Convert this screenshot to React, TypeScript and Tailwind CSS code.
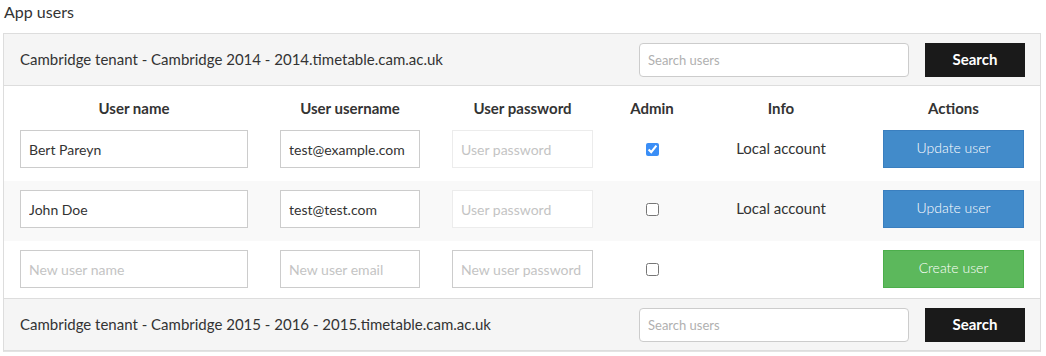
import React from "react";

type User = { name: string; email: string; admin: boolean; info: string };

const tenants: { title: string; users: User[] }[] = [
    {
        title: "Cambridge tenant - Cambridge 2014 - 2014.timetable.cam.ac.uk",
        users: [
            { name: "Bert Pareyn", email: "test@example.com", admin: true, info: "Local account" },
            { name: "John Doe", email: "test@test.com", admin: false, info: "Local account" },
        ],
    },
    { title: "Cambridge tenant - Cambridge 2015 - 2016 - 2015.timetable.cam.ac.uk", users: [] },
];

const font = { fontFamily: "Lato, 'Open Sans', sans-serif" };
const gridCls = "grid grid-cols-[260px_172px_173px_86px_172px_1fr]";
const inputCls = "w-full h-[38px] px-[8px] bg-white border border-[#cccccc] text-[14px] text-[#333] placeholder:text-[#c4c4c4] outline-none";

function TenantHeader({ title }: { title: string }) {
    return (
        <div className="flex items-center justify-between h-[52px] bg-[#f5f5f5] border-b border-[#dddddd] pl-4 pr-[15px]">
            <span className="text-[15px] text-[#333]">{title}</span>
            <div className="flex items-center gap-4">
                <input className="w-[270px] h-[34px] px-[8px] rounded border border-[#cccccc] bg-white text-[13px] placeholder:text-[#b0b0b0] outline-none" placeholder="Search users" />
                <button className="w-[100px] h-[34px] bg-[#1a1a1a] text-white text-[15px] font-bold">Search</button>
            </div>
        </div>
    );
}

function UserRow({ user, striped }: { user: User; striped: boolean }) {
    return (
        <div className={`${gridCls} h-[60px] pt-[9px] ${striped ? "bg-[#f9f9f9]" : "bg-white"}`}>
            <div className="px-4"><input className={inputCls} defaultValue={user.name} /></div>
            <div className="px-4"><input className={inputCls} defaultValue={user.email} /></div>
            <div className="px-4"><input className={`${inputCls} border-[#ececec]`} placeholder="User password" /></div>
            <div className="flex justify-center pt-[13px]">
                <input type="checkbox" defaultChecked={user.admin} className="w-[13px] h-[13px] accent-[#3a8ef6]" />
            </div>
            <div className="text-center text-[15px] text-[#333] pt-[7px]">{user.info}</div>
            <div className="px-4">
                <button className="w-full h-[38px] pb-[3px] bg-[#428bca] border border-[#3a7fbf] text-white text-[14px] font-light">Update user</button>
            </div>
        </div>
    );
}

export default function App() {
    return (
        <div className="pl-[3px] pr-[5px] bg-white text-[#333]" style={font}>
            <h1 className="h-[33px] text-[16px] leading-[22px] pt-[1px] pl-[1px]">App users</h1>
            <div className="border border-[#dddddd] border-b-[#e3e3e3]">
                {tenants.map((t, i) => (
                    <div key={i} className={i > 0 ? "border-t border-[#dddddd]" : ""}>
                        <TenantHeader title={t.title} />
                        {t.users.length > 0 && (
                            <>
                                <div className={`${gridCls} h-[35px] pt-[12px] text-[15px] font-bold text-[#333] text-center leading-5`}>
                                    <div>User name</div>
                                    <div>User username</div>
                                    <div>User password</div>
                                    <div>Admin</div>
                                    <div>Info</div>
                                    <div>Actions</div>
                                </div>
                                {t.users.map((u, j) => (
                                    <UserRow key={j} user={u} striped={j % 2 === 1} />
                                ))}
                                <div className={`${gridCls} h-[57px] pt-[9px] bg-white`}>
                                    <div className="px-4"><input className={inputCls} placeholder="New user name" /></div>
                                    <div className="px-4"><input className={inputCls} placeholder="New user email" /></div>
                                    <div className="px-4"><input className={inputCls} placeholder="New user password" /></div>
                                    <div className="flex justify-center pt-[13px]">
                                        <input type="checkbox" className="w-[13px] h-[13px]" />
                                    </div>
                                    <div />
                                    <div className="px-4">
                                        <button className="w-full h-[38px] pb-[3px] bg-[#5cb85c] border border-[#4cae4c] text-white text-[14px] font-light">Create user</button>
                                    </div>
                                </div>
                            </>
                        )}
                    </div>
                ))}
            </div>
        </div>
    );
}
